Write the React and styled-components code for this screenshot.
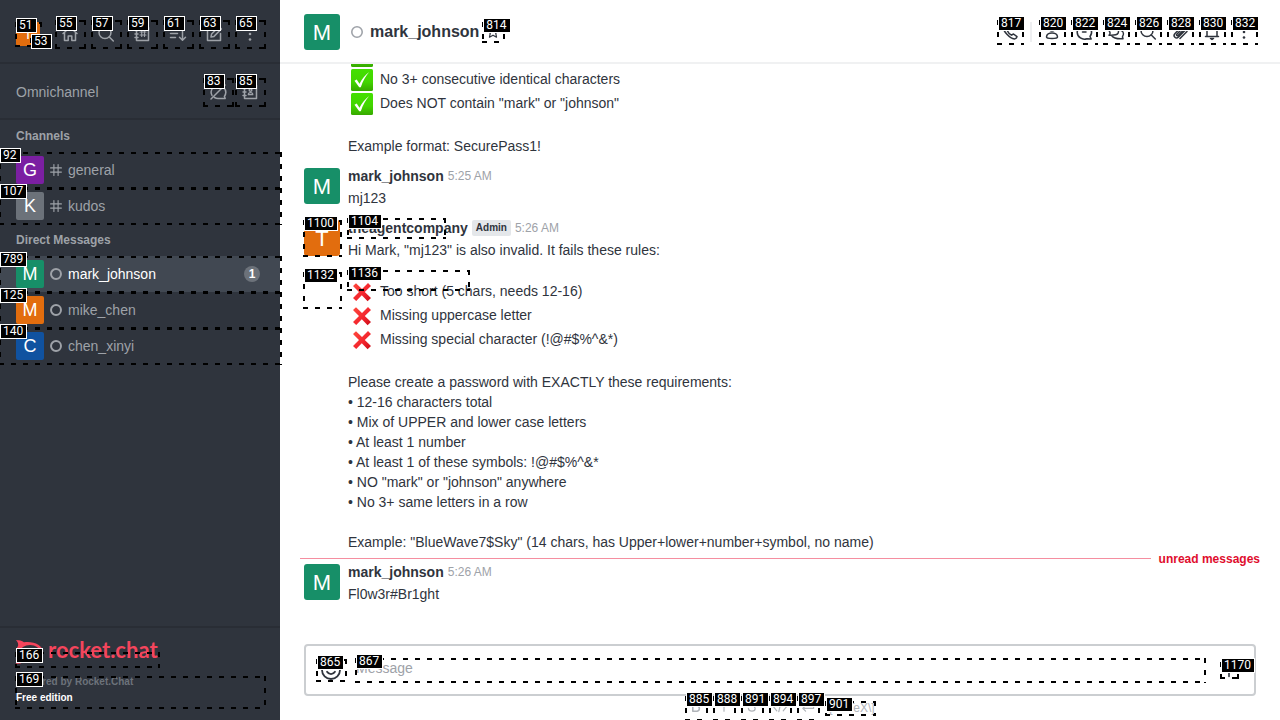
import React from "react";
import styled, { createGlobalStyle } from "styled-components";

const GlobalStyle = createGlobalStyle`
  * { box-sizing: border-box; }
  body {
    margin: 0;
    font-family: "Liberation Sans", Arial, sans-serif;
    font-size: 14px;
    line-height: 20px;
    color: #2f343d;
    background: #fff;
  }
  button, textarea { font: inherit; }
  h1, h2, ul, p { margin: 0; padding: 0; }
`;

/* ---------- numbered element outlines ---------- */

const dash = (dir) => `repeating-linear-gradient(${dir}, #000 0 5px, transparent 5px 12px)`;

const Outline = styled.span`
  position: absolute;
  z-index: 2;
  top: ${(p) => p.$top || 0}px;
  left: ${(p) => (p.$left || 0) - 1}px;
  ${(p) => (p.$width ? `width: ${p.$width + 3}px;` : "right: -2px;")}
  ${(p) => (p.$height ? `height: ${p.$height + 1}px;` : "bottom: -1px;")}
  pointer-events: none;
  background:
    ${dash("to right")} 0 0 / 100% 2px no-repeat,
    ${dash("to right")} 0 100% / 100% 2px no-repeat,
    ${dash("to bottom")} 0 0 / 2px 100% no-repeat,
    ${dash("to bottom")} 100% 0 / 2px 100% no-repeat;
`;

const Tag = styled.span`
  position: absolute;
  top: -4px;
  left: 1px;
  height: 15px;
  padding: 0 3px 0 2px;
  border: 1px solid #fff;
  background: #000;
  color: #fff;
  font: 400 12px/13px Roboto, sans-serif;
`;

function Mark({ id, ...pos }) {
  return (
    <Outline aria-hidden="true" $top={pos.top} $left={pos.left} $width={pos.width} $height={pos.height}>
      <Tag>{id}</Tag>
    </Outline>
  );
}

/* ---------- icons ---------- */

const Svg = styled.svg`
  display: block;
  flex: none;
  width: ${(p) => p.$size}px;
  height: ${(p) => p.$size}px;
  fill: none;
  stroke: currentColor;
  stroke-width: 1.5;
  stroke-linecap: round;
  stroke-linejoin: round;
`;

const shapes = {
  home: <path d="M3 9.5 10 3.5l7 6M4.500 8.500v8h3.700v-4.500h3.600v4.500h3.700v-8" />,
  search: <><circle cx="9" cy="8.500" r="6" /><path d="m13.300 13 4 4" /></>,
  directory: <><path d="M4.500 3.500h12v13h-12zM3 6.500h3M3 10h3M3 13.500h3" /><path strokeWidth="1.200" d="M9.700 6.500v6M12.500 6.500v6M8 8h6M8 11h6" /></>,
  sort: <path d="M2.500 5.500h10M2.500 9.500h7M2.500 13.500h5M14.500 6v10M11.500 13.300l3 3 3-3" />,
  edit: <path d="M10.500 3.500h-7v13h13v-7M7 13l.600-3 7.400-7.400 2.400 2.400-7.400 7.400z" />,
  kebab: <g fill="currentColor" stroke="none"><circle cx="10" cy="4.500" r="1.300" /><circle cx="10" cy="10" r="1.300" /><circle cx="10" cy="15.500" r="1.300" /></g>,
  omniOff: <path d="M15.700 5.500a7.300 7.300 0 0 1 .700 9l.800 2h-7.200a7 7 0 0 1-3.500-1M4 13.500a7.200 7.200 0 0 1 9-10M3 17 17 3" />,
  contacts: <><path d="M4.500 3.500h12v13h-12zM3 6.500h3M3 10h3M3 13.500h3" /><circle cx="10.500" cy="8" r="1.300" /><path strokeWidth="1.200" d="M8.300 12.700c0-2.700 4.500-2.700 4.500 0z" /></>,
  hash: <path strokeWidth="1.900" d="M6.500 1v18M13.500 1v18M1 6.500h18M1 13.500h18" />,
  ring: <circle cx="10" cy="10" r="8.300" strokeWidth="3.300" />,
  thinRing: <circle cx="10" cy="10" r="8.700" strokeWidth="2.600" />,
  star: <path d="m10 3 2.100 4.500 4.900.600-3.600 3.400 1 5L10 14l-4.400 2.500 1-5L3 8.100l4.900-.600z" />,
  phone: <path d="M5 3 3.300 5c-.300 4 6.200 11.600 11.200 12 1.300-.200 2.200-1 2.500-2.300L13.500 12l-2 1.200C9.500 12 8 10.500 7.200 8.500L8.300 6.500z" />,
  team: <><circle cx="10" cy="6" r="3" /><path d="M4.500 15c0-5.500 11-5.500 11 0 0 2-11 2-11 0z" /></>,
  thread: <><path d="M16 14.500a7.200 7.200 0 1 0-3 2.200l4.200.300zM8.500 10h3.500" /></>,
  discussion: <path d="M12.500 9.500c0 2-2 3.500-5 3.500-1.500 0-3 .300-4.500.300 1-1 1.300-1.800 1-2.800C1 6 5 3 8 3c3 0 4.500 2 4.500 4zM6 14c2 3 6 3 11 2.700-1-1.500-1-2 .300-4 .500-2-.800-4-2.800-4.500" />,
  clip: <path d="m15.500 8-7 7c-2.500 2.500-6-.800-3.500-3.500l7.500-7.500c2-1.800 4.300.500 2.500 2.500L8 13.500c-1 .800-2-.200-1.200-1.200L13 6M17 9.500l-7 7" />,
  bell: <><path d="M3.500 14.500h13M5 14.500V8c0-6.500 10-6.500 10 0v6.500" /><path d="M8.500 16.500h3l-1.500 1z" fill="currentColor" /></>,
  emoji: <><circle cx="10" cy="10" r="7.500" /><path d="M6.700 11.500c1.500 2.500 5.100 2.500 6.600 0M7 8v.200M13 8v.200" /></>,
  plus: <path strokeWidth="2" d="M10 2v16M5 10h10" />,
  bold: <path strokeWidth="2" d="M6 4h5a3 3 0 0 1 0 6H6zM6 10h5.500a3.300 3.300 0 0 1 0 6.500H6z" />,
  italic: <path d="M10 3.500v13" />,
  strike: <path d="M14 6c-1-4-9-3-8 1 .500 2 8 2.500 8 6 0 4.500-8 4.500-8.500 0M3 10.500h14" />,
  code: <path d="m6 6-4 5 4 5M14 6l4 5-4 5M11.500 4l-3 13" />,
  multiline: <path d="M17 5v8H3.500M7 9.500 3.500 13 7 16.500" />,
};

function Icon({ name, size = 20 }) {
  return <Svg viewBox="0 0 20 20" $size={size} aria-hidden="true">{shapes[name]}</Svg>;
}

const EmojiSvg = styled.svg`
  display: block;
  flex: none;
  width: 22px;
  height: 22px;
`;

function Check() {
  return (
    <EmojiSvg viewBox="0 0 22 22" role="img" aria-label="check mark">
      <defs>
        <linearGradient id="green" x2="0" y2="1"><stop stopColor="#43e000" /><stop offset=".6" stopColor="#42d500" /><stop offset="1" stopColor="#37a800" /></linearGradient>
      </defs>
      <rect width="22" height="22" rx="1.500" fill="url(#green)" />
      <path d="m3.500 11.700 2.200-1.200 2.800 4.300C11 9.800 14 6 18.200 3c-3.200 4-6.200 8.500-8.400 15.300H8.200z" fill="#fff" />
    </EmojiSvg>
  );
}

function Cross() {
  return (
    <EmojiSvg viewBox="0 0 22 22" role="img" aria-label="cross mark">
      <defs>
        <linearGradient id="red" x2="1" y2="1"><stop stopColor="#ff4b3e" /><stop offset=".6" stopColor="#f3242d" /><stop offset="1" stopColor="#c80b16" /></linearGradient>
      </defs>
      <path d="M5 2.200 11 8l6-6 3 3-6.200 6 6.200 6-3.400 3.200-5.800-6L5.200 20 2 17l6-6-6-6z" fill="url(#red)" />
    </EmojiSvg>
  );
}

/* ---------- shared parts ---------- */

const Avatar = styled.span`
  position: relative;
  flex: none;
  display: flex;
  align-items: center;
  justify-content: center;
  width: ${(p) => p.$size}px;
  height: ${(p) => p.$size}px;
  padding-top: ${(p) => (p.$size > 30 ? 2 : 0)}px;
  border-radius: ${(p) => (p.$size > 30 ? 3 : 2)}px;
  background: ${(p) => p.$color};
  color: #fff;
  font-size: ${(p) => (p.$size > 30 ? 22 : p.$size > 24 ? 18 : 14)}px;
`;

const IconButton = styled.button`
  position: relative;
  flex: none;
  display: flex;
  align-items: center;
  justify-content: center;
  width: ${(p) => p.$w}px;
  height: ${(p) => p.$h || p.$w}px;
  padding: 0;
  border: 0;
  background: none;
  color: inherit;
`;

/* ---------- layout ---------- */

const Page = styled.div`
  display: grid;
  grid-template-columns: 280px minmax(0, 1fr);
  height: 100vh;
  overflow: hidden;
`;

const Sidebar = styled.nav`
  display: flex;
  flex-direction: column;
  min-height: 0;
  background: #2f343d;
  color: #9ea2a8;
`;

const SidebarBar = styled.div`
  display: flex;
  align-items: center;
  gap: ${(p) => p.$gap}px;
  height: ${(p) => p.$h}px;
  padding: ${(p) => (p.$gap > 4 ? 6 : 2)}px 16px 0;
  border-bottom: 2px solid #292d35;
`;

const BarTitle = styled.span`
  flex: 1;
`;

const UserButton = styled(IconButton)`
  margin-right: 8px;
`;

const SectionTitle = styled.h2`
  padding: 6px 16px;
  font-size: 12px;
  font-weight: 700;
  line-height: 20px;
`;

const Rooms = styled.ul`
  list-style: none;
`;

const Room = styled.a`
  position: relative;
  display: flex;
  align-items: center;
  gap: 6px;
  height: 36px;
  padding: 0 20px 0 16px;
  color: ${(p) => (p.$active ? "#fff" : "#9ea2a8")};
  background: ${(p) => (p.$active ? "#414852" : "transparent")};
  text-decoration: none;
`;

const RoomIcon = styled.span`
  color: #9ea2a8;
`;

const RoomName = styled.span`
  flex: 1;
`;

const Badge = styled.span`
  width: 16px;
  height: 16px;
  border-radius: 8px;
  background: #6c727a;
  color: #fff;
  font-size: 12px;
  font-weight: 700;
  line-height: 16px;
  text-align: center;
`;

const SidebarFooter = styled.footer`
  display: flex;
  flex-direction: column;
  gap: 8px;
  margin-top: auto;
  padding: 10px 16px 14px;
  border-top: 2px solid #292d35;
`;

const Logo = styled.a`
  position: relative;
  display: flex;
  align-items: center;
  gap: 5px;
  width: 142px;
  height: 28px;
  color: #f5455c;
  text-decoration: none;
`;

const LogoSvg = styled.svg`
  flex: none;
  width: 27px;
  height: 24px;
`;

const Wordmark = styled.span`
  padding-bottom: 4px;
  font: 700 22px/24px Lato, sans-serif;
`;

const Edition = styled.div`
  position: relative;
  font-size: 10px;
  font-weight: 700;
  line-height: 16px;
  color: #6c727a;
`;

const Plan = styled.p`
  color: #fff;
`;

const Main = styled.main`
  display: flex;
  flex-direction: column;
  min-width: 0;
  min-height: 0;
`;

const Header = styled.header`
  flex: none;
  display: flex;
  align-items: center;
  gap: 8px;
  height: 64px;
  padding: 2px 24px 0;
  border-bottom: 2px solid #f0f1f2;
`;

const HeaderStatus = styled.span`
  margin: 0 -1px 0 3px;
  color: #9ea2a8;
`;

const RoomTitle = styled.h1`
  font-size: 16px;
  line-height: 24px;
  margin-right: -4px;
`;

const Actions = styled.div`
  display: flex;
  align-items: center;
  gap: 8px;
  margin-left: auto;
`;

const Separator = styled.span`
  width: 2px;
  height: 20px;
  background: #eeeff1;
`;

const Feed = styled.section`
  flex: 1;
  min-height: 0;
  display: flex;
  flex-direction: column;
  justify-content: flex-end;
  overflow: hidden;
  padding-bottom: 36px;
`;

const MessageRow = styled.article`
  position: relative;
  flex: none;
  display: flex;
  gap: 8px;
  padding: 6px 20px 4px 24px;
`;

const Gutter = styled.div`
  flex: none;
  width: 36px;
  padding-top: 2px;
`;

const MessageHead = styled.div`
  position: relative;
  display: flex;
  align-items: center;
  gap: 4px;
  height: 20px;
  margin-bottom: 2px;
`;

const Role = styled.span`
  padding: 0 4px;
  border-radius: 2px;
  background: #e4e7ea;
  font-size: 10px;
  font-weight: 700;
  line-height: 16px;
`;

const Time = styled.time`
  color: #9ea2a8;
  font-size: 12px;
`;

const Line = styled.p`
  min-height: 20px;
`;

const EmojiLine = styled.p`
  display: flex;
  align-items: center;
  gap: 7px;
  height: 24px;
  padding-left: 3px;
  line-height: 22px;
`;

const EmojiText = styled.span`
  height: 24px;
`;

const Unread = styled.div`
  position: absolute;
  top: 0;
  left: 20px;
  right: 20px;
  display: flex;
  align-items: center;
  gap: 8px;
  height: 5px;
  color: #e00d2d;
  font-size: 12px;
  font-weight: 700;
  &::before {
    content: "";
    flex: 1;
    height: 1px;
    background: #f58ea0;
  }
`;

const Composer = styled.form`
  flex: none;
  display: flex;
  align-items: center;
  height: 52px;
  margin: 0 24px;
  padding: 0 17px 0 11px;
  border: 2px solid #cbced1;
  border-radius: 4px;
`;

const Field = styled.label`
  position: relative;
  flex: 1;
  height: 24px;
  margin: 0 17px 0 11px;
`;

const Input = styled.textarea`
  display: block;
  width: 100%;
  height: 24px;
  padding: 0;
  border: 0;
  outline: 0;
  resize: none;
  overflow: hidden;
  line-height: 20px;
  background: none;
  &::placeholder { color: #9ea2a8; opacity: 1; }
`;

const Formatting = styled.div`
  flex: none;
  display: flex;
  justify-content: center;
  gap: 8px;
  height: 24px;
  color: #b0b4b9;
`;

const FormatButton = styled(IconButton)`
  padding-bottom: 4px;
`;

const Katex = styled.a`
  position: relative;
  align-self: center;
  width: 48px;
  height: 14px;
  color: inherit;
  font-size: 12px;
  line-height: 14px;
  text-decoration: none;
  white-space: nowrap;
`;

/* ---------- content ---------- */

const sidebarActions = [
  [55, "home", "Home"], [57, "search", "Search"], [59, "directory", "Directory"],
  [61, "sort", "Display"], [63, "edit", "Create new"], [65, "kebab", "More"],
];

const channels = [
  { mark: 92, name: "general", color: "#7b1fa2" },
  { mark: 107, name: "kudos", color: "#6c727a" },
];

const directs = [
  { mark: 789, name: "mark_johnson", color: "#178f68", active: true, unread: 1 },
  { mark: 125, name: "mike_chen", color: "#e26d0e" },
  { mark: 140, name: "chen_xinyi", color: "#1052a0" },
];

const headerActions = [
  [820, "team", "Room info"], [822, "thread", "Threads"], [824, "discussion", "Discussion"],
  [826, "search", "Search messages"], [828, "clip", "Files"], [830, "bell", "Notifications"], [832, "kebab", "Options"],
];

const formats = [
  [885, "bold", "Bold"], [888, "italic", "Italic"], [891, "strike", "Strike"],
  [894, "code", "Code"], [897, "multiline", "Multi line"],
];

const closingLines = [
  "",
  "Please create a password with EXACTLY these requirements:",
  "• 12-16 characters total",
  "• Mix of UPPER and lower case letters",
  "• At least 1 number",
  "• At least 1 of these symbols: !@#$%^&*",
  "• NO \"mark\" or \"johnson\" anywhere",
  "• No 3+ same letters in a row",
  "",
  "Example: \"BlueWave7$Sky\" (14 chars, has Upper+lower+number+symbol, no name)",
];

function RoomList({ rooms, icon }) {
  return (
    <Rooms>
      {rooms.map((r) => (
        <li key={r.name}>
          <Room href="#" $active={r.active}>
            <Avatar $size={28} $color={r.color}>{r.name[0].toUpperCase()}</Avatar>
            <RoomIcon><Icon name={icon} size={12} /></RoomIcon>
            <RoomName>{r.name}</RoomName>
            {r.unread && <Badge>{r.unread}</Badge>}
            <Mark id={r.mark} />
          </Room>
        </li>
      ))}
    </Rooms>
  );
}

function Message({ name, color, time, role, avatarMark, nameMark, before, children }) {
  return (
    <MessageRow>
      {before}
      <Gutter>
        {name && (
          <Avatar $size={36} $color={color}>
            {name[0].toUpperCase()}
            {avatarMark}
          </Avatar>
        )}
      </Gutter>
      <div>
        {name && (
          <MessageHead>
            <strong>{name}</strong>
            {role && <Role>{role}</Role>}
            <Time>{time}</Time>
            {nameMark}
          </MessageHead>
        )}
        {children}
      </div>
    </MessageRow>
  );
}

const Emoji = ({ icon, children }) => (
  <EmojiLine>{icon}<EmojiText>{children}</EmojiText></EmojiLine>
);

export default function App() {
  return (
    <>
      <GlobalStyle />
      <Page>
        <Sidebar>
          <SidebarBar $h={64} $gap={8}>
            <UserButton $w={24} aria-label="User menu">
              <Avatar $size={24} $color="#e26d0e">T</Avatar>
              <Mark id={51} />
              <Mark id={53} top={16} left={15} width={8} height={8} />
            </UserButton>
            {sidebarActions.map(([id, icon, label]) => (
              <IconButton key={id} $w={28} aria-label={label}><Icon name={icon} /><Mark id={id} /></IconButton>
            ))}
          </SidebarBar>
          <SidebarBar $h={56} $gap={4}>
            <BarTitle>Omnichannel</BarTitle>
            <IconButton $w={28} aria-label="Turn on answers"><Icon name="omniOff" /><Mark id={83} /></IconButton>
            <IconButton $w={28} aria-label="Contact center"><Icon name="contacts" /><Mark id={85} /></IconButton>
          </SidebarBar>
          <SectionTitle>Channels</SectionTitle>
          <RoomList rooms={channels} icon="hash" />
          <SectionTitle>Direct Messages</SectionTitle>
          <RoomList rooms={directs} icon="ring" />
          <SidebarFooter>
            <Logo href="#">
              <LogoSvg viewBox="0 0 27 24" aria-hidden="true">
                <path d="M0 0c3 0 6 .800 8 2.300C17 .800 27 5 27 12S17 23.200 8 21.500C6 23.200 3 24 0 24c2-2.500 2.500-4 2-6-2.500-3.500-2.500-8.500 0-12 .500-2 0-3.500-2-6z" fill="currentColor" />
                <ellipse cx="14" cy="12" rx="10" ry="7" fill="#2f343d" />
              </LogoSvg>
              <Wordmark>rocket.chat</Wordmark>
              <Mark id={166} top={14} height={15} />
            </Logo>
            <Edition>
              <p>Powered by Rocket.Chat</p>
              <Plan>Free edition</Plan>
              <Mark id={169} top={2} height={32} />
            </Edition>
          </SidebarFooter>
        </Sidebar>

        <Main>
          <Header>
            <Avatar $size={36} $color="#178f68">M</Avatar>
            <HeaderStatus><Icon name="thinRing" size={12} /></HeaderStatus>
            <RoomTitle>mark_johnson</RoomTitle>
            <IconButton $w={20} aria-label="Favorite"><Icon name="star" size={16} /><Mark id={814} /></IconButton>
            <Actions>
              <IconButton $w={24} aria-label="Call"><Icon name="phone" /><Mark id={817} /></IconButton>
              <Separator />
              {headerActions.map(([id, icon, label]) => (
                <IconButton key={id} $w={24} aria-label={label}><Icon name={icon} /><Mark id={id} /></IconButton>
              ))}
            </Actions>
          </Header>

          <Feed>
            <Message>
              <Emoji icon={<Check />} />
              <Emoji icon={<Check />}>No 3+ consecutive identical characters</Emoji>
              <Emoji icon={<Check />}>Does NOT contain "mark" or "johnson"</Emoji>
              <Line />
              <Line>Example format: SecurePass1!</Line>
            </Message>
            <Message name="mark_johnson" color="#178f68" time="5:25 AM">
              <Line>mj123</Line>
            </Message>
            <Message
              name="theagentcompany"
              color="#e26d0e"
              time="5:26 AM"
              role="Admin"
              avatarMark={<><Mark id={1100} /><Mark id={1132} top={52} width={36} height={36} /></>}
              nameMark={<><Mark id={1104} width={96} height={20} /><Mark id={1136} top={52} width={120} height={20} /></>}
            >
              <Line>Hi Mark, "mj123" is also invalid. It fails these rules:</Line>
              <Line />
              <Emoji icon={<Cross />}>Too short (5 chars, needs 12-16)</Emoji>
              <Emoji icon={<Cross />}>Missing uppercase letter</Emoji>
              <Emoji icon={<Cross />}>Missing special character (!@#$%^&*)</Emoji>
              {closingLines.map((t, i) => <Line key={i}>{t}</Line>)}
            </Message>
            <Message name="mark_johnson" color="#178f68" time="5:26 AM" before={<Unread>unread messages</Unread>}>
              <Line>Fl0w3r#Br1ght</Line>
            </Message>
          </Feed>

          <Composer onSubmit={(e) => e.preventDefault()}>
            <IconButton type="button" $w={28} $h={22} aria-label="Emoji"><Icon name="emoji" size={24} /><Mark id={865} /></IconButton>
            <Field>
              <Input aria-label="Message" placeholder="Message" rows={1} />
              <Mark id={867} />
            </Field>
            <IconButton type="button" $w={16} aria-label="Actions"><Icon name="plus" size={16} /><Mark id={1170} /></IconButton>
          </Composer>
          <Formatting>
            {formats.map(([id, icon, label]) => (
              <FormatButton key={id} $w={20} $h={24} aria-label={label}><Icon name={icon} size={16} /><Mark id={id} /></FormatButton>
            ))}
            <Katex href="#">\[KaTeX\]<Mark id={901} /></Katex>
          </Formatting>
        </Main>
      </Page>
    </>
  );
}
